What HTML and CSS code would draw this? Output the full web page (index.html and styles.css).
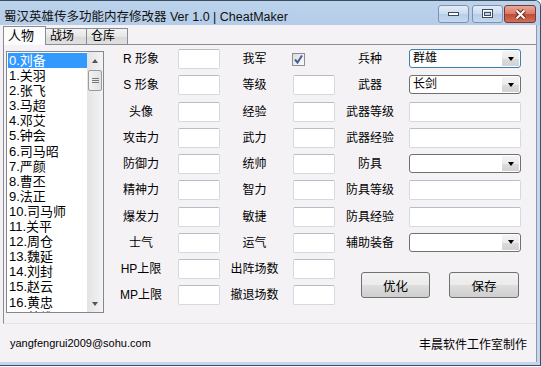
FILE: index.html
```html
<!DOCTYPE html>
<html lang="zh">
<head>
    <meta charset="UTF-8">
    <title>蜀汉英雄传多功能内存修改器</title>
    <link rel="stylesheet" href="styles.css">
</head>
<body>
<div class="window">
    <div class="titlebar">
        <span class="title">蜀汉英雄传多功能内存修改器 Ver 1.0 | CheatMaker</span>
        <div class="caption">
            <span class="cap-btn">
                <svg width="12" height="5"><rect x="0.5" y="0.5" width="10" height="3" fill="#fff" stroke="#3b4a60"/></svg>
            </span>
            <span class="cap-btn max">
                <svg width="12" height="10"><rect x="0.5" y="0.5" width="10" height="8" fill="none" stroke="#3b4a60"/><rect x="1.5" y="1.5" width="8" height="6" fill="none" stroke="#fff"/><rect x="2.5" y="3.5" width="6" height="3" fill="none" stroke="#3b4a60"/></svg>
            </span>
            <span class="cap-btn close">
                <svg width="13" height="11"><path d="M2.5 1.5 L10.5 9.5 M10.5 1.5 L2.5 9.5" stroke="#6a2a20" stroke-width="4"/><path d="M2.5 1.5 L10.5 9.5 M10.5 1.5 L2.5 9.5" stroke="#fff" stroke-width="2"/></svg>
            </span>
        </div>
    </div>

    <div class="client">
        <div class="tabs">
            <span class="tab active">人物</span>
            <span class="tab">战场</span>
            <span class="tab">仓库</span>
        </div>

        <div class="panel">
            <div class="listbox">
                <div class="items">
                    <div class="item selected">0.刘备</div>
                    <div class="item">1.关羽</div>
                    <div class="item">2.张飞</div>
                    <div class="item">3.马超</div>
                    <div class="item">4.邓艾</div>
                    <div class="item">5.钟会</div>
                    <div class="item">6.司马昭</div>
                    <div class="item">7.严颜</div>
                    <div class="item">8.曹丕</div>
                    <div class="item">9.法正</div>
                    <div class="item">10.司马师</div>
                    <div class="item">11.关平</div>
                    <div class="item">12.周仓</div>
                    <div class="item">13.魏延</div>
                    <div class="item">14.刘封</div>
                    <div class="item">15.赵云</div>
                    <div class="item">16.黄忠</div>
                    <div class="item">17.姜维</div>
                </div>
                <div class="scrollbar">
                    <div class="sb-btn"><span class="arrow-up"></span></div>
                    <div class="sb-thumb"><span class="grip"></span></div>
                    <div class="sb-track"></div>
                    <div class="sb-btn"><span class="arrow-down"></span></div>
                </div>
            </div>

            <div class="form">
                <span class="lbl">R 形象</span>
                <input class="box" type="text">
                <span class="lbl">我军</span>
                <span class="check-cell">
                    <span class="check">
                        <svg width="11" height="11"><path d="M2 5.5 L4.5 8.5 L9 1.5" fill="none" stroke="#4a5f97" stroke-width="2"/></svg>
                    </span>
                </span>
                <span class="lbl">兵种</span>
                <div class="combo hot"><span class="combo-text">群雄</span><span class="combo-btn"><span class="arrow-down black"></span></span></div>

                <span class="lbl">S 形象</span>
                <input class="box" type="text">
                <span class="lbl">等级</span>
                <input class="box" type="text">
                <span class="lbl">武器</span>
                <div class="combo"><span class="combo-text">长剑</span><span class="combo-btn"><span class="arrow-down black"></span></span></div>

                <span class="lbl">头像</span>
                <input class="box" type="text">
                <span class="lbl">经验</span>
                <input class="box" type="text">
                <span class="lbl">武器等级</span>
                <input class="box" type="text">

                <span class="lbl">攻击力</span>
                <input class="box" type="text">
                <span class="lbl">武力</span>
                <input class="box" type="text">
                <span class="lbl">武器经验</span>
                <input class="box" type="text">

                <span class="lbl">防御力</span>
                <input class="box" type="text">
                <span class="lbl">统帅</span>
                <input class="box" type="text">
                <span class="lbl">防具</span>
                <div class="combo"><span class="combo-text"></span><span class="combo-btn"><span class="arrow-down black"></span></span></div>

                <span class="lbl">精神力</span>
                <input class="box" type="text">
                <span class="lbl">智力</span>
                <input class="box" type="text">
                <span class="lbl">防具等级</span>
                <input class="box" type="text">

                <span class="lbl">爆发力</span>
                <input class="box" type="text">
                <span class="lbl">敏捷</span>
                <input class="box" type="text">
                <span class="lbl">防具经验</span>
                <input class="box" type="text">

                <span class="lbl">士气</span>
                <input class="box" type="text">
                <span class="lbl">运气</span>
                <input class="box" type="text">
                <span class="lbl">辅助装备</span>
                <div class="combo"><span class="combo-text"></span><span class="combo-btn"><span class="arrow-down black"></span></span></div>

                <span class="lbl">HP上限</span>
                <input class="box" type="text">
                <span class="lbl">出阵场数</span>
                <input class="box" type="text">
                <div class="actions">
                    <button class="btn">优化</button>
                    <button class="btn">保存</button>
                </div>

                <span class="lbl">MP上限</span>
                <input class="box" type="text">
                <span class="lbl">撤退场数</span>
                <input class="box" type="text">
            </div>
        </div>

        <div class="footer">
            <span class="email">yangfengrui2009@sohu.com</span>
            <span class="credit">丰晨软件工作室制作</span>
        </div>
    </div>
</div>
</body>
</html>
```

FILE: styles.css
```css
body {
    margin: 0;
    background-color: #fff;
    font-family: "Liberation Sans", "Noto Sans CJK SC", sans-serif;
    font-size: 12px;
    color: #000;
}
.window {
    width: 541px;
    height: 366px;
    box-sizing: border-box;
    border: 1px solid #3f4d61;
    border-left: none;
    border-top-right-radius: 6px;
    background-color: #c3d8ef;
    display: flex;
    flex-direction: column;
    overflow: hidden;
}
.titlebar {
    height: 24px;
    flex-shrink: 0;
    display: flex;
    justify-content: space-between;
    background: linear-gradient(#bcd3ec, #b4cce8);
}
.title {
    padding: 5px 0 0 4px;
    font-size: 12.5px;
    color: #111;
}
.caption {
    display: flex;
    margin: 4px 4px 0 0;
}
.cap-btn {
    width: 29px;
    height: 16px;
    border: 1px solid #7e93b1;
    border-radius: 3px;
    background: linear-gradient(#e2ecf7, #cbdbee 50%, #b7cde7 51%, #c6d8ee);
    display: flex;
    align-items: center;
    justify-content: center;
}
.cap-btn.max {
    margin-left: 3px;
}
.cap-btn.close {
    margin-left: 1px;
    width: 30px;
    border-color: #7a3a31;
    background: linear-gradient(#e9a899, #d67966 50%, #c24a33 51%, #d0705a);
}
.client {
    flex: 1;
    margin: 0 3px 3px 0;
    background-color: #f5f2f6;
    border-right: 1px solid #8e98a6;
    display: flex;
    flex-direction: column;
}
.tabs {
    height: 18px;
    padding: 1px 0 0 3px;
    display: flex;
    align-items: flex-start;
}
.tab {
    box-sizing: border-box;
    width: 41px;
    height: 16px;
    margin-top: 2px;
    padding-left: 4px;
    border: 1px solid #898c95;
    border-bottom: none;
    border-left: none;
    background: linear-gradient(#f3f3f3, #e6e6e6 50%, #d9d9d9 51%, #e0e0e0);
    line-height: 15px;
    font-size: 12px;
}
.tab.active {
    width: 43px;
    height: 19px;
    margin-top: 0;
    border-left: 1px solid #898c95;
    background: #fcfcfd;
    line-height: 17px;
    position: relative;
    z-index: 1;
    font-size: 13px;
}
.panel {
    box-sizing: border-box;
    height: 280px;
    margin-left: 3px;
    border-left: 1px solid #898c95;
    border-top: 1px solid #898c95;
    border-bottom: 1px solid #e6e2e8;
    padding: 4px 0 0 2px;
    display: flex;
    align-items: flex-start;
}
.listbox {
    box-sizing: border-box;
    width: 98px;
    height: 262px;
    margin-top: 2px;
    border: 1px solid #828790;
    background-color: #fff;
    display: flex;
}
.items {
    flex: 1;
    padding: 1px 0 0 1px;
    overflow: hidden;
}
.item {
    height: 15.1px;
    line-height: 15px;
    font-size: 13px;
    padding-left: 1px;
    white-space: nowrap;
}
.item.selected {
    background-color: #3399ff;
    color: #fff;
}
.scrollbar {
    width: 16px;
    display: flex;
    flex-direction: column;
    background: linear-gradient(to right, #e3e3e3, #f4f4f4);
}
.sb-btn {
    height: 17px;
    display: flex;
    align-items: center;
    justify-content: center;
}
.arrow-up {
    width: 0;
    height: 0;
    border-left: 3.5px solid transparent;
    border-right: 3.5px solid transparent;
    border-bottom: 4px solid #555;
}
.arrow-down {
    width: 0;
    height: 0;
    border-left: 3.5px solid transparent;
    border-right: 3.5px solid transparent;
    border-top: 4px solid #555;
}
.arrow-down.black {
    border-top-color: #000;
}
.sb-thumb {
    box-sizing: border-box;
    height: 21px;
    margin: 1px 1px 0 1px;
    border: 1px solid #9b9b9b;
    border-radius: 2px;
    background: linear-gradient(to right, #f2f2f2, #e2e2e2);
    display: flex;
    align-items: center;
    justify-content: center;
}
.grip {
    width: 7px;
    height: 5px;
    background: repeating-linear-gradient(#777 0 1px, transparent 1px 2px);
}
.sb-track {
    flex: 1;
}
.form {
    margin-left: 4px;
    display: grid;
    grid-template-columns: 70px 42px 73px 42px 74px 112px;
    grid-auto-rows: 20px;
    row-gap: 6.25px;
}
.lbl {
    padding-right: 4px;
    text-align: center;
    line-height: 20px;
    font-size: 12px;
    white-space: nowrap;
}
.box {
    box-sizing: border-box;
    width: 100%;
    height: 20px;
    margin: 0;
    border: 1px solid #d5d8de;
    border-top-color: #b9bcc3;
    border-radius: 2px;
    background-color: #fff;
    padding: 0 2px;
}
.check-cell {
    display: flex;
    align-items: center;
    margin-left: -1px;
    padding-top: 1px;
}
.check {
    box-sizing: border-box;
    width: 13px;
    height: 13px;
    border: 1px solid #8e8f8f;
    background: linear-gradient(135deg, #dcdcdc, #fbfbfb);
    display: flex;
    align-items: center;
    justify-content: center;
}
.combo {
    box-sizing: border-box;
    height: 19px;
    border: 1px solid #707070;
    border-radius: 3px;
    background-color: #fff;
    padding: 1px;
    display: flex;
}
.combo.hot {
    border-color: #3c7fb1;
}
.combo-text {
    flex: 1;
    padding-left: 2px;
    line-height: 15px;
    font-size: 12px;
}
.combo-btn {
    width: 17px;
    background: linear-gradient(#f4f4f4, #ebebeb 50%, #dcdcdc 51%, #d2d2d2);
    display: flex;
    align-items: center;
    justify-content: center;
}
.actions {
    grid-column: 5 / 7;
    grid-row: 9 / 11;
    display: flex;
    align-items: flex-start;
    gap: 19px;
    padding: 13px 0 0 26px;
}
.btn {
    box-sizing: border-box;
    width: 69px;
    height: 26px;
    border: 1px solid #707070;
    border-radius: 3px;
    background: linear-gradient(#f2f2f2, #ebebeb 50%, #dddddd 51%, #cfcfcf);
    font-family: "Liberation Sans", "Noto Sans CJK SC", sans-serif;
    font-size: 12.5px;
    color: #000;
    padding: 0;
}
.btn + .btn {
    width: 70px;
}
.footer {
    flex: 1;
    display: flex;
    justify-content: space-between;
    align-items: center;
    padding: 0 9px 0 10px;
}
.email {
    font-size: 11px;
}
.credit {
    font-size: 12px;
}
```
